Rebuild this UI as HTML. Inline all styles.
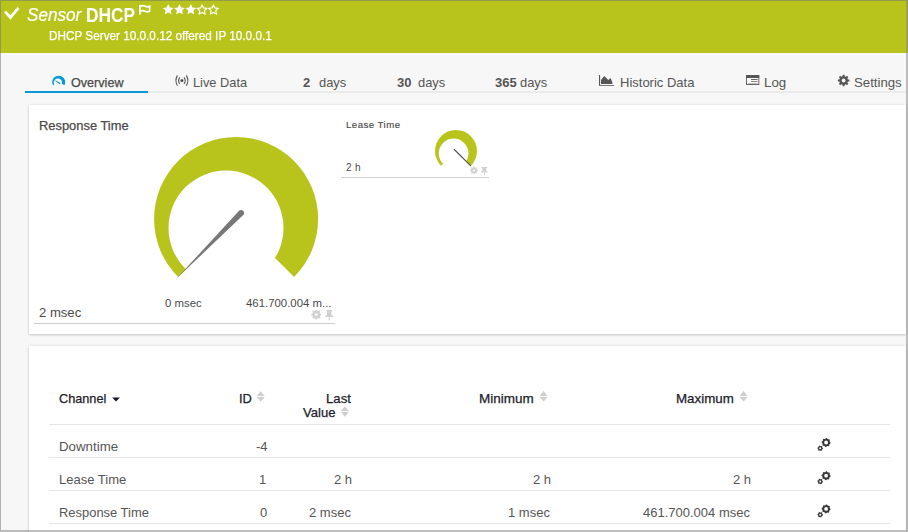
<!DOCTYPE html>
<html><head><meta charset="utf-8">
<style>
*{margin:0;padding:0;box-sizing:border-box}
html,body{width:908px;height:532px;overflow:hidden;background:#f7f7f7}
body{position:relative;font-family:"Liberation Sans",sans-serif;color:#555}
.t{position:absolute;white-space:nowrap;line-height:1}
#frame{position:absolute;left:0;top:0;width:908px;height:532px;border-top:1px solid rgba(120,120,120,0.55);border-left:1px solid rgba(120,120,120,0.55);border-right:2px solid rgba(128,128,128,0.5);border-bottom:2px solid rgba(128,128,128,0.5)}
#hdr{position:absolute;left:0;top:0;width:908px;height:53px;background:#b8c41c}
.panel{position:absolute;background:#fff;box-shadow:0 1px 2px rgba(0,0,0,0.16),0 0 4px rgba(0,0,0,0.07)}
svg.ov{position:absolute;left:0;top:0}
</style></head><body>
<div id="hdr"></div>
<div class="panel" style="left:29px;top:105px;width:877px;height:229px"></div>
<div class="panel" style="left:29px;top:346px;width:877px;height:190px"></div>
<svg class="ov" width="908" height="532" viewBox="0 0 908 532">
<defs>
<mask id="m1"><rect x="0" y="0" width="908" height="532" fill="#fff"/><circle cx="57.9" cy="82.7" r="4.2" fill="#000"/></mask>
<g id="sort"><path d="M-4 4.8 L0 0 L4 4.8 Z M-4 5.8 L4 5.8 L0 10.5 Z" fill="#cfcfcf"/></g>
</defs>
<!-- checkmark -->
<polygon points="4.1,12.5 6,10.7 10.5,15.2 17.4,7 19.4,8.7 10.5,19.8" fill="#fff"/>
<!-- flag -->
<rect x="139" y="5" width="1.9" height="9.6" fill="#fff"/>
<path d="M140.8 6 Q143 5.2 145.2 6.3 Q147.5 7.3 149.6 6.2 L149.6 11.3 Q147.5 12.3 145.2 11.3 Q143 10.2 140.8 11" fill="none" stroke="#fff" stroke-width="1.7"/>

<polygon points="168.20,4.00 169.85,7.43 173.62,7.94 170.86,10.57 171.55,14.31 168.20,12.50 164.85,14.31 165.54,10.57 162.78,7.94 166.55,7.43" fill="#fff"/>
<polygon points="179.50,4.00 181.15,7.43 184.92,7.94 182.16,10.57 182.85,14.31 179.50,12.50 176.15,14.31 176.84,10.57 174.08,7.94 177.85,7.43" fill="#fff"/>
<polygon points="190.80,4.00 192.45,7.43 196.22,7.94 193.46,10.57 194.15,14.31 190.80,12.50 187.45,14.31 188.14,10.57 185.38,7.94 189.15,7.43" fill="#fff"/>
<polygon points="202.10,4.90 203.57,7.88 206.86,8.35 204.48,10.67 205.04,13.95 202.10,12.40 199.16,13.95 199.72,10.67 197.34,8.35 200.63,7.88" fill="none" stroke="#fff" stroke-width="1.1" stroke-linejoin="miter"/>
<polygon points="213.40,4.90 214.87,7.88 218.16,8.35 215.78,10.67 216.34,13.95 213.40,12.40 210.46,13.95 211.02,10.67 208.64,8.35 211.93,7.88" fill="none" stroke="#fff" stroke-width="1.1" stroke-linejoin="miter"/>
<!-- tab underline -->
<rect x="25" y="91" width="881" height="2" fill="#ebebeb"/>
<rect x="25" y="91" width="123" height="2" fill="#0a98d6"/>
<!-- overview icon -->
<path d="M58.7 82.2 L52.96 85.25 A6.5 6.5 0 1 1 64.44 85.25 Z" fill="#0a98d6" mask="url(#m1)"/>
<path d="M55.3 80.2 L55.1 80.7 L59.4 84.2 A0.8 0.8 0 0 0 60.3 83.1 Z" fill="#0a98d6"/>
<!-- live data icon -->
<circle cx="181.9" cy="80.6" r="1.6" fill="#555"/>
<path d="M179.8 77.3 A5.5 5.5 0 0 0 179.8 83.9 M184 77.3 A5.5 5.5 0 0 1 184 83.9" fill="none" stroke="#555" stroke-width="1.1"/>
<path d="M177.5 75.4 A10 10 0 0 0 177.5 85.8 M186.3 75.4 A10 10 0 0 1 186.3 85.8" fill="none" stroke="#555" stroke-width="1.1"/>
<!-- historic icon -->
<rect x="599" y="75" width="1.1" height="11" fill="#555"/>
<rect x="599" y="85" width="15" height="1" fill="#777"/>
<polygon points="601,84 601,80 604.2,76 608.3,80 610.6,78 612.4,82.6 612.4,84" fill="#555"/>
<!-- log icon -->
<rect x="746.5" y="75.5" width="12.3" height="9" fill="none" stroke="#666" stroke-width="1"/>
<rect x="746" y="75" width="13.2" height="3" fill="#555"/>
<rect x="751" y="79" width="6.5" height="1" fill="#666"/>
<rect x="751" y="81" width="6.5" height="1" fill="#888"/>
<rect x="748" y="83" width="9.5" height="1" fill="#bbb"/>
<!-- settings gear -->
<polygon points="847.87,79.44 849.32,79.55 849.32,81.45 847.87,81.56 847.37,82.77 848.32,83.87 846.97,85.22 845.87,84.27 844.66,84.77 844.55,86.22 842.65,86.22 842.54,84.77 841.33,84.27 840.23,85.22 838.88,83.87 839.83,82.77 839.33,81.56 837.88,81.45 837.88,79.55 839.33,79.44 839.83,78.23 838.88,77.13 840.23,75.78 841.33,76.73 842.54,76.23 842.65,74.78 844.55,74.78 844.66,76.23 845.87,76.73 846.97,75.78 848.32,77.13 847.37,78.23" fill="#555"/><circle cx="843.6" cy="80.5" r="1.9" fill="#f7f7f7"/>
<!-- big gauge -->
<path d="M236.1 219 L178.12 276.98 A82 82 0 1 1 294.08 276.98 Z" fill="#b8c41c"/>
<circle cx="226" cy="228" r="57.5" fill="#fff"/>
<path d="M176 279 L239.3 210.6 A3 3 0 0 1 243.5 214.8 Z" fill="#777"/>
<polygon points="320.08,313.66 321.23,313.78 321.23,315.42 320.08,315.54 319.64,316.61 320.37,317.51 319.21,318.67 318.31,317.94 317.24,318.38 317.12,319.53 315.48,319.53 315.36,318.38 314.29,317.94 313.39,318.67 312.23,317.51 312.96,316.61 312.52,315.54 311.37,315.42 311.37,313.78 312.52,313.66 312.96,312.59 312.23,311.69 313.39,310.53 314.29,311.26 315.36,310.82 315.48,309.67 317.12,309.67 317.24,310.82 318.31,311.26 319.21,310.53 320.37,311.69 319.64,312.59" fill="#d0d0d0"/><circle cx="316.3" cy="314.6" r="1.4" fill="#fff"/>
<rect x="326.3" y="310" width="5.8" height="1.2" fill="#d0d0d0"/>
<rect x="327" y="311" width="4.4" height="5" fill="#d0d0d0"/>
<rect x="325.3" y="315.5" width="7.8" height="1.5" fill="#d0d0d0"/>
<rect x="328.7" y="317" width="1" height="3.3" fill="#d0d0d0"/>
<rect x="34" y="323" width="301" height="1" fill="#cfcfcf"/>
<!-- small gauge -->
<path d="M456 151 L441.15 165.85 A21 21 0 1 1 470.85 165.85 Z" fill="#b8c41c"/>
<circle cx="453.6" cy="153.4" r="14.8" fill="#fff"/>
<path d="M454.3 149.5 L470.5 165.6" stroke="#505050" stroke-width="1.1" stroke-linecap="round"/>
<polygon points="476.91,169.68 477.85,169.76 477.85,171.04 476.91,171.12 476.57,171.95 477.17,172.67 476.27,173.57 475.55,172.97 474.72,173.31 474.64,174.25 473.36,174.25 473.28,173.31 472.45,172.97 471.73,173.57 470.83,172.67 471.43,171.95 471.09,171.12 470.15,171.04 470.15,169.76 471.09,169.68 471.43,168.85 470.83,168.13 471.73,167.23 472.45,167.83 473.28,167.49 473.36,166.55 474.64,166.55 474.72,167.49 475.55,167.83 476.27,167.23 477.17,168.13 476.57,168.85" fill="#d0d0d0"/><circle cx="474" cy="170.4" r="1.0" fill="#fff"/>
<rect x="481.5" y="167" width="5.6" height="1" fill="#d0d0d0"/>
<rect x="482.3" y="168" width="4" height="3.5" fill="#d0d0d0"/>
<rect x="481" y="171.3" width="6.6" height="1.2" fill="#d0d0d0"/>
<rect x="484" y="172.5" width="0.9" height="2.5" fill="#d0d0d0"/>
<rect x="341" y="177" width="148" height="1" fill="#cfcfcf"/>
<!-- table -->
<rect x="49" y="424" width="841" height="1" fill="#e6e6e6"/>
<rect x="49" y="457" width="841" height="1" fill="#e6e6e6"/>
<rect x="49" y="490" width="841" height="1" fill="#e6e6e6"/>
<rect x="49" y="523" width="841" height="1" fill="#e6e6e6"/>
<path d="M112.2 397.4 L119.9 397.4 L116 401.4 Z" fill="#15152a"/>
<use href="#sort" x="260.7" y="391.2"/>
<use href="#sort" x="344.9" y="406.3"/>
<use href="#sort" x="543.6" y="391.1"/>
<use href="#sort" x="743.6" y="391.1"/>
<g id="g1">
<path fill-rule="evenodd" d="M830.60,442.50 L830.51,443.38 L829.61,443.95 L829.26,444.61 L829.28,445.68 L828.60,446.24 L827.55,446.01 L826.84,446.23 L826.10,447.00 L825.22,446.91 L824.65,446.01 L823.99,445.66 L822.92,445.68 L822.36,445.00 L822.59,443.95 L822.37,443.24 L821.60,442.50 L821.69,441.62 L822.59,441.05 L822.94,440.39 L822.92,439.32 L823.60,438.76 L824.65,438.99 L825.36,438.77 L826.10,438.00 L826.98,438.09 L827.55,438.99 L828.21,439.34 L829.28,439.32 L829.84,440.00 L829.61,441.05 L829.83,441.76 Z M828.00,442.50 A1.9 1.9 0 1 0 824.20,442.50 A1.9 1.9 0 1 0 828.00,442.50 Z" fill="#3a3a3a"/>
<path fill-rule="evenodd" d="M823.00,448.30 L822.90,449.02 L822.19,449.45 L821.83,449.93 L821.60,450.72 L820.92,451.00 L820.20,450.60 L819.60,450.52 L818.80,450.72 L818.22,450.28 L818.21,449.45 L817.98,448.90 L817.40,448.30 L817.50,447.58 L818.21,447.15 L818.57,446.67 L818.80,445.88 L819.48,445.60 L820.20,446.00 L820.80,446.08 L821.60,445.88 L822.18,446.32 L822.19,447.15 L822.42,447.70 Z M821.20,448.30 A1.0 1.0 0 1 0 819.20,448.30 A1.0 1.0 0 1 0 821.20,448.30 Z" fill="#3a3a3a"/>
</g>
<use href="#g1" x="0" y="33.2"/>
<use href="#g1" x="0" y="66.4"/>
</svg>
<div class="t" style="left:27px;top:6px;color:#fff;font-size:18px;font-style:italic;-webkit-text-stroke:0.2px currentColor;transform:scaleX(0.95);transform-origin:0 0;">Sensor</div>
<div class="t" style="left:86px;top:6px;color:#fff;font-size:19.6px;font-weight:bold;transform:scaleX(0.886);transform-origin:0 0;">DHCP</div>
<div class="t" style="left:49px;top:30px;color:#fff;font-size:12.5px;-webkit-text-stroke:0.25px currentColor;transform:scaleX(0.94);transform-origin:0 0;">DHCP Server 10.0.0.12 offered IP 10.0.0.1</div>
<div class="t" style="left:71px;top:77px;color:#4a4a4a;font-size:12.6px;-webkit-text-stroke:0.25px currentColor;">Overview</div>
<div class="t" style="left:193px;top:77px;color:#555;font-size:12.8px;">Live Data</div>
<div class="t" style="left:303px;top:76px;color:#555;font-size:13px;font-weight:bold;">2</div>
<div class="t" style="left:319px;top:77px;color:#555;font-size:12.9px;">days</div>
<div class="t" style="left:397px;top:76px;color:#555;font-size:13px;font-weight:bold;">30</div>
<div class="t" style="left:418px;top:77px;color:#555;font-size:12.9px;">days</div>
<div class="t" style="left:495px;top:76px;color:#555;font-size:13px;font-weight:bold;">365</div>
<div class="t" style="left:520px;top:77px;color:#555;font-size:12.9px;">days</div>
<div class="t" style="left:620px;top:76px;color:#555;font-size:13px;">Historic Data</div>
<div class="t" style="left:764px;top:76px;color:#555;font-size:13.3px;">Log</div>
<div class="t" style="left:854px;top:76px;color:#555;font-size:13.2px;">Settings</div>
<div class="t" style="left:39px;top:120px;color:#4a4a4a;font-size:12.9px;-webkit-text-stroke:0.25px currentColor;">Response Time</div>
<div class="t" style="left:165px;top:298px;color:#4a4a4a;font-size:11.4px;">0 msec</div>
<div class="t" style="left:246px;top:298px;color:#4a4a4a;font-size:11.4px;">461.700.004 m...</div>
<div class="t" style="left:39px;top:306px;color:#4a4a4a;font-size:13.1px;">2 msec</div>
<div class="t" style="left:346px;top:120px;color:#4a4a4a;font-size:9.7px;-webkit-text-stroke:0.15px currentColor;letter-spacing:0.45px;">Lease Time</div>
<div class="t" style="left:346px;top:163px;color:#4a4a4a;font-size:10px;letter-spacing:0.3px;">2 h</div>
<div class="t" style="left:59px;top:393px;color:#1c1c2a;font-size:12.7px;-webkit-text-stroke:0.25px currentColor;">Channel</div>
<div class="t" style="left:239px;top:393px;color:#1c1c2a;font-size:12.9px;-webkit-text-stroke:0.25px currentColor;">ID</div>
<div class="t" style="left:326px;top:392px;color:#1c1c2a;font-size:13.2px;-webkit-text-stroke:0.25px currentColor;">Last</div>
<div class="t" style="left:303px;top:406px;color:#1c1c2a;font-size:13.1px;-webkit-text-stroke:0.25px currentColor;">Value</div>
<div class="t" style="left:479px;top:392px;color:#1c1c2a;font-size:13.5px;-webkit-text-stroke:0.25px currentColor;">Minimum</div>
<div class="t" style="left:676px;top:392px;color:#1c1c2a;font-size:13.35px;-webkit-text-stroke:0.25px currentColor;">Maximum</div>
<div class="t" style="left:59px;top:440px;color:#555;font-size:13.3px;">Downtime</div>
<div class="t" style="left:59px;top:473px;color:#555;font-size:13px;">Lease Time</div>
<div class="t" style="left:59px;top:507px;color:#555;font-size:12.95px;">Response Time</div>
<div class="t" style="left:256px;top:440px;color:#555;font-size:13px;">-4</div>
<div class="t" style="left:259px;top:473px;color:#555;font-size:13px;">1</div>
<div class="t" style="left:260px;top:506px;color:#555;font-size:13px;">0</div>
<div class="t" style="left:334px;top:473px;color:#555;font-size:13px;">2 h</div>
<div class="t" style="left:309px;top:506px;color:#555;font-size:13px;">2 msec</div>
<div class="t" style="left:533px;top:473px;color:#555;font-size:13px;">2 h</div>
<div class="t" style="left:508px;top:506px;color:#555;font-size:13px;">1 msec</div>
<div class="t" style="left:733px;top:473px;color:#555;font-size:13px;">2 h</div>
<div class="t" style="left:643px;top:506px;color:#555;font-size:13px;">461.700.004 msec</div>
<div id="frame"></div>
</body></html>
